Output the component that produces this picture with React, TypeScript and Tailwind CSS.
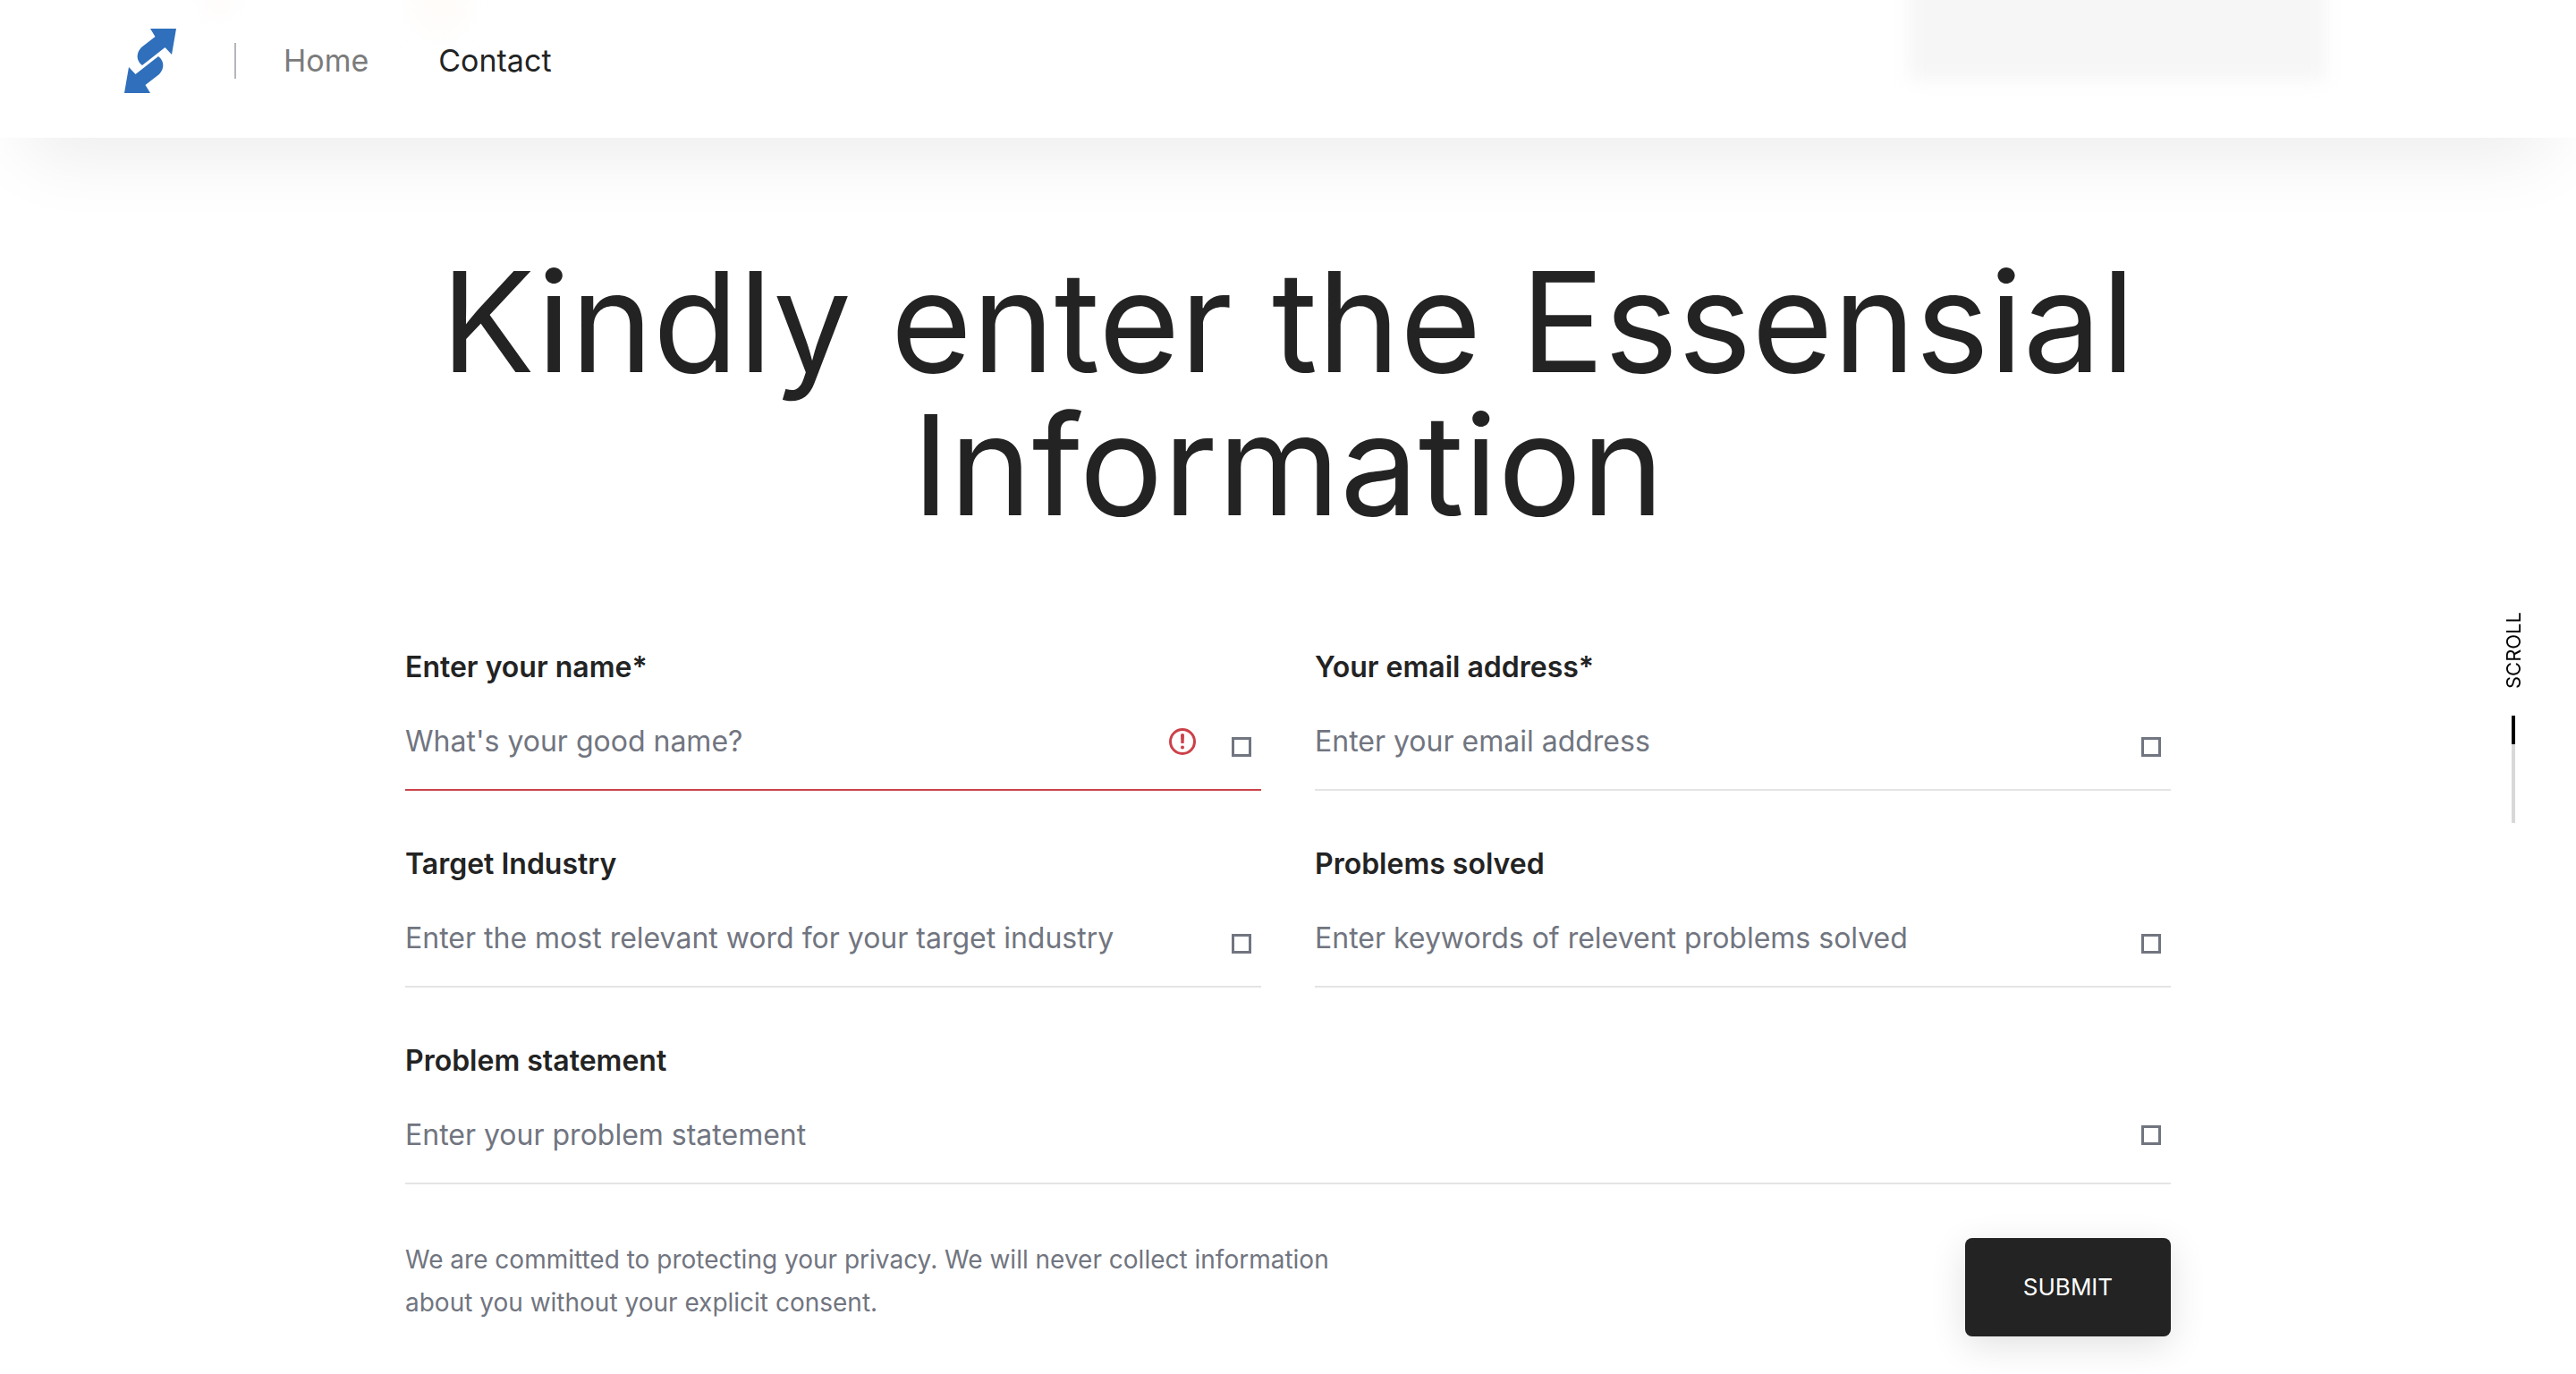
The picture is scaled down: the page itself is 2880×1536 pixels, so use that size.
import { useId } from "react";

function Logo() {
  return (
    <svg viewBox="0 0 58 72" className="h-18 w-[58px]" aria-hidden="true">
      <g fill="#2f6fbb">
        <path d="M29 0H58L53 29L45.500 21L20 41C13 36 13 27 19 21L34.500 9Z" />
        <path d="M29 72H0L5 43L12.500 51L38 31C45 36 45 45 39 51L23.500 63Z" />
      </g>
    </svg>
  );
}

function ErrorIcon() {
  return (
    <svg viewBox="0 0 30 30" className="size-[30px] shrink-0" role="img" aria-label="Required">
      <circle cx="15" cy="15" r="13.500" fill="none" stroke="#cc4149" strokeWidth="3" />
      <path d="M13 7.500Q13 6 15 6T17 7.500L16.600 17H13.400Z" fill="#cc4149" />
      <circle cx="15" cy="21.500" r="2" fill="#cc4149" />
    </svg>
  );
}

type FieldProps = {
  label: string;
  placeholder: string;
  type?: string;
  invalid?: boolean;
  multiline?: boolean;
};

function Field({ label, placeholder, type = "text", invalid, multiline }: FieldProps) {
  const id = useId();
  const control =
    "min-w-0 flex-1 resize-none bg-transparent text-[32px] leading-12 text-[#232323] outline-none placeholder:text-[#717580] placeholder:opacity-100";
  return (
    <div className={multiline ? "col-span-2" : ""}>
      <label htmlFor={id} className="block text-[32px] leading-12 font-semibold text-[#232323]">
        {label}
      </label>
      <div
        className={`mt-1.5 flex h-27 items-center border-b-2 ${invalid ? "border-[#cc4149]" : "border-[#e4e4e4]"}`}
      >
        {multiline ? (
          <textarea id={id} rows={1} placeholder={placeholder} className={`${control} h-12 overflow-hidden`} />
        ) : (
          <input id={id} type={type} placeholder={placeholder} aria-invalid={invalid} className={control} />
        )}
        {invalid && <ErrorIcon />}
        <span
          aria-hidden="true"
          className={`mr-[11px] ml-10 size-[22px] shrink-0 border-3 border-[#717580] ${multiline ? "" : "mt-3"}`}
        />
      </div>
    </div>
  );
}

export default function App() {
  return (
    <div className="relative min-h-screen overflow-hidden bg-white font-['Inter',sans-serif]">
      <header className="relative flex h-[154px] items-start bg-white px-[139px] pt-8 shadow-[0_50px_80px_-30px_rgba(0,0,0,0.08)]">
        <div className="pointer-events-none absolute inset-0 overflow-hidden">
          <div className="absolute -top-20 right-[280px] h-[170px] w-[466px] bg-[#f6f6f6] blur-[10px]" />
          <div className="absolute -top-5 left-[225px] h-10 w-10 rounded-full bg-[#fffcfb] blur-[8px]" />
          <div className="absolute -top-10 left-[460px] h-20 w-16 rounded-full bg-[#fffcfa] blur-[12px]" />
        </div>
        <a href="#" aria-label="Homepage" className="relative">
          <Logo />
        </a>
        <nav className="relative ml-[65px] flex h-[72px] items-center text-[34px] leading-10">
          <span className="h-10 w-0.5 bg-[#b5b5bb]" />
          <a href="#" className="ml-[53px] text-[#7b7b7b]">Home</a>
          <a href="#" className="ml-[78px] text-[#232323]">Contact</a>
        </nav>
      </header>

      <main className="mx-auto w-full max-w-[1974px] pt-[126px]">
        <h1 className="text-center text-[156px] leading-40 text-[#232323]">
          Kindly enter the Essensial
          <br />
          Information
        </h1>
        <form className="mt-[122px]" onSubmit={(e) => e.preventDefault()}>
          <div className="grid grid-cols-2 gap-x-[60px] gap-y-[58px]">
            <Field label="Enter your name*" placeholder="What's your good name?" invalid />
            <Field label="Your email address*" placeholder="Enter your email address" type="email" />
            <Field label="Target Industry" placeholder="Enter the most relevant word for your target industry" />
            <Field label="Problems solved" placeholder="Enter keywords of relevent problems solved" />
            <Field label="Problem statement" placeholder="Enter your problem statement" multiline />
          </div>
          <div className="mt-15 flex items-start justify-between">
            <p className="max-w-[1100px] text-[28px] leading-12 text-[#717580]">
              We are committed to protecting your privacy. We will never collect information about you without your
              explicit consent.
            </p>
            <button
              type="submit"
              className="h-[110px] w-[230px] rounded-lg bg-[#232323] text-[26px] leading-8 text-white shadow-[0_10px_40px_rgba(0,0,0,0.12)]"
            >
              SUBMIT
            </button>
          </div>
        </form>
      </main>

      <aside className="absolute top-[684px] right-[56px] flex flex-col items-center gap-[30px]">
        <a href="#" className="rotate-180 text-[22px] leading-7 text-black [writing-mode:vertical-rl]">
          SCROLL
        </a>
        <div className="h-30 w-1 bg-[#d8d8d8]">
          <div className="h-8 w-1 bg-black" />
        </div>
      </aside>
    </div>
  );
}
